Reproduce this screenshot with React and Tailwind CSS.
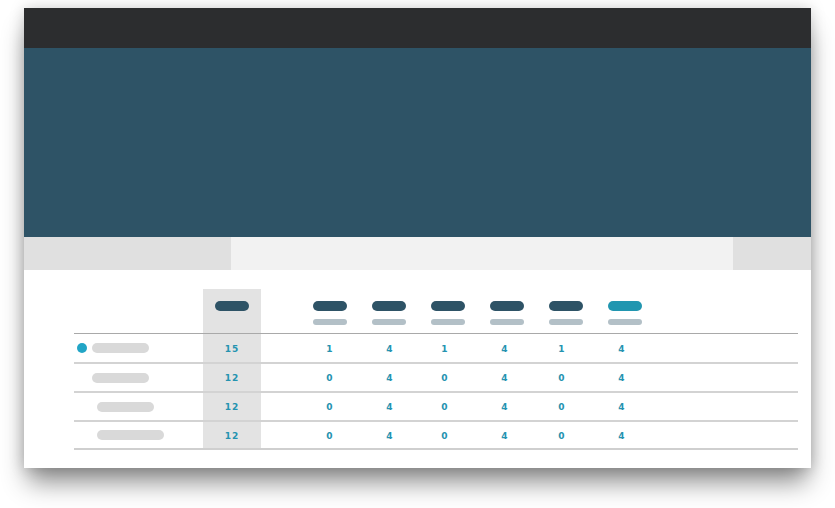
import React from 'react';

const headerPills = [
  { ml: 'ml-[52px]', active: false },
  { ml: 'ml-[25px]', active: false },
  { ml: 'ml-[25px]', active: false },
  { ml: 'ml-[25px]', active: false },
  { ml: 'ml-[25px]', active: false },
  { ml: 'ml-[25px]', active: true },
];

// offsets that put each 20px number cell under its column
const cellOffsets = ['ml-[59px]', 'ml-[40px]', 'ml-[35px]', 'ml-[40px]', 'ml-[37px]', 'ml-[40px]'];

const rows = [
  { total: 15, values: [1, 4, 1, 4, 1, 4], dot: true, indent: 'pl-[18px]', labelW: 'w-[57px]', h: 'h-[28px]', border: 'border-b-2 border-[#d3d3d3]' },
  { total: 12, values: [0, 4, 0, 4, 0, 4], dot: false, indent: 'pl-[18px]', labelW: 'w-[57px]', h: 'h-[27px]', border: 'border-b-2 border-[#d3d3d3]' },
  { total: 12, values: [0, 4, 0, 4, 0, 4], dot: false, indent: 'pl-[23px]', labelW: 'w-[57px]', h: 'h-[27px]', border: 'border-b-2 border-[#d3d3d3]' },
  { total: 12, values: [0, 4, 0, 4, 0, 4], dot: false, indent: 'pl-[23px]', labelW: 'w-[67px]', h: 'h-[26px]', border: 'border-b-2 border-[#cfcfcf]' },
];

const numClass = "pt-[2px] text-[9px] font-bold tracking-[1px] text-[#2593b0] font-['DejaVu_Sans',sans-serif] leading-none";

const TableRow = ({ row }) => (
  <div className={`flex items-stretch ${row.border}`}>
    <div className={`w-[129px] flex items-center ${row.indent} ${row.h} relative`}>
      {row.dot && (
        <span className="absolute left-[3px] top-1/2 -translate-y-1/2 w-[10px] h-[10px] rounded-full bg-[#22a5c6]" />
      )}
      <span className={`${row.labelW} h-[10px] rounded-full bg-[#d9d9d9]`} />
    </div>
    <div className={`w-[58px] bg-[#e3e3e3] flex items-center justify-center ${numClass}`}>
      {row.total}
    </div>
    {row.values.map((v, i) => (
      <div key={i} className={`${cellOffsets[i]} w-[20px] flex items-center justify-center ${numClass}`}>
        {v}
      </div>
    ))}
  </div>
);

export default function App() {
  return (
    <div className="w-[835px] h-[508px] bg-white overflow-hidden pt-[8px] pl-[24px]">
      <div className="w-[787px] h-[460px] bg-white flex flex-col shadow-[0_18px_24px_-4px_rgba(0,0,0,0.45),0_0_14px_rgba(0,0,0,0.18)]">
        {/* top bar */}
        <div className="h-[40px] bg-[#2c2d2f]" />
        {/* hero */}
        <div className="h-[189px] bg-[#2e5366]" />
        {/* tabs */}
        <div className="h-[33px] flex">
          <div className="w-[207px] bg-[#e0e0e0]" />
          <div className="w-[502px] bg-[#f2f2f2]" />
          <div className="flex-1 bg-[#e0e0e0]" />
        </div>

        {/* table */}
        <div className="ml-[50px] mr-[13px] mt-[19px]">
          <div className="flex h-[45px] border-b border-[#a9a9a9]">
            <div className="w-[129px]" />
            <div className="w-[58px] bg-[#e3e3e3] flex justify-center pt-[12px]">
              <span className="w-[34px] h-[10px] rounded-full bg-[#2e5366]" />
            </div>
            {headerPills.map((p, i) => (
              <div key={i} className={`${p.ml} w-[34px] pt-[12px] flex flex-col gap-[8px]`}>
                <span className={`w-[34px] h-[10px] rounded-full ${p.active ? 'bg-[#2196b0]' : 'bg-[#2e5366]'}`} />
                <span className="w-[34px] h-[6px] rounded-full bg-[#b3c0c7]" />
              </div>
            ))}
          </div>
          {rows.map((row, i) => (
            <TableRow key={i} row={row} />
          ))}
        </div>
      </div>
    </div>
  );
}
